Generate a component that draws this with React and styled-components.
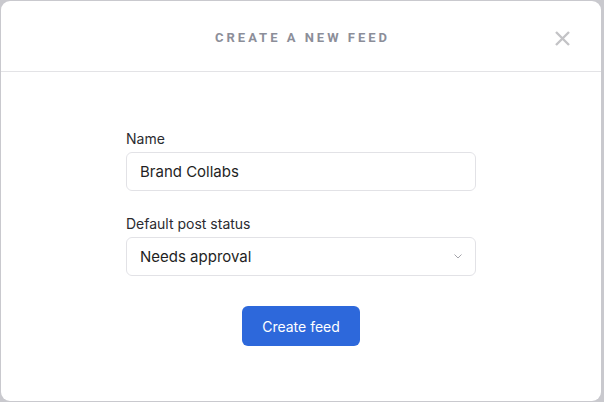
import React from "react";
import styled, { createGlobalStyle } from "styled-components";

const GlobalStyle = createGlobalStyle`
  html, body {
    margin: 0;
    padding: 0;
    background: #c9c9ce;
  }
  * {
    box-sizing: border-box;
  }
`;

const Backdrop = styled.div`
  width: 604px;
  height: 402px;
  padding: 1px 3px 1px 1px;
  background: #c9c9ce;
  display: flex;
  font-family: Inter, "Noto Sans", sans-serif;
`;

const Modal = styled.div`
  flex: 1;
  background: #ffffff;
  border-radius: 9px;
  display: flex;
  flex-direction: column;
  overflow: hidden;
`;

const Header = styled.div`
  position: relative;
  height: 71px;
  padding-top: 2px;
  border-bottom: 1px solid #e3e3e6;
  display: flex;
  align-items: center;
  justify-content: center;
`;

const Title = styled.h2`
  margin: 0;
  font-family: Roboto, "Noto Sans", sans-serif;
  font-size: 13px;
  font-weight: 700;
  letter-spacing: 3px;
  color: #8c8e99;
  padding-left: 3px;
`;

const CloseButton = styled.button`
  position: absolute;
  right: 31px;
  top: 29px;
  width: 16px;
  height: 16px;
  padding: 0;
  border: none;
  background: none;
  display: flex;
  align-items: center;
  justify-content: center;
`;

const Body = styled.div`
  flex: 1;
  display: flex;
  flex-direction: column;
  align-items: center;
  padding-top: 58px;
`;

const Form = styled.div`
  width: 350px;
  display: flex;
  flex-direction: column;
`;

const Field = styled.div`
  display: flex;
  flex-direction: column;
  gap: 4px;
  margin-bottom: 24px;
`;

const Label = styled.label`
  font-size: 14px;
  line-height: 18px;
  color: #2b2b30;
`;

const Box = styled.div`
  height: 39px;
  border: 1px solid #e2e2e6;
  border-radius: 6px;
  padding: 0 13px;
  display: flex;
  align-items: center;
  justify-content: space-between;
  font-size: 15px;
  color: #1f1f24;
`;

const Actions = styled.div`
  display: flex;
  justify-content: center;
  margin-top: 6px;
`;

const PrimaryButton = styled.button`
  width: 118px;
  height: 40px;
  border: none;
  border-radius: 6px;
  background: #2d68db;
  color: #ffffff;
  font-family: Inter, "Noto Sans", sans-serif;
  font-size: 14px;
`;

const App = () => (
  <>
    <GlobalStyle />
    <Backdrop>
      <Modal>
        <Header>
          <Title>CREATE A NEW FEED</Title>
          <CloseButton aria-label="Close">
            <svg width="15" height="15" viewBox="0 0 15 15">
              <path d="M1 1L14 14M14 1L1 14" stroke="#c3c3c6" strokeWidth="2.4" />
            </svg>
          </CloseButton>
        </Header>
        <Body>
          <Form>
            <Field>
              <Label>Name</Label>
              <Box>Brand Collabs</Box>
            </Field>
            <Field>
              <Label>Default post status</Label>
              <Box>
                Needs approval
                <svg width="8" height="5" viewBox="0 0 8 5">
                  <path d="M0.5 0.5L4 4L7.5 0.5" stroke="#a5a5ab" fill="none" strokeWidth="1" />
                </svg>
              </Box>
            </Field>
            <Actions>
              <PrimaryButton>Create feed</PrimaryButton>
            </Actions>
          </Form>
        </Body>
      </Modal>
    </Backdrop>
  </>
);

export default App;
